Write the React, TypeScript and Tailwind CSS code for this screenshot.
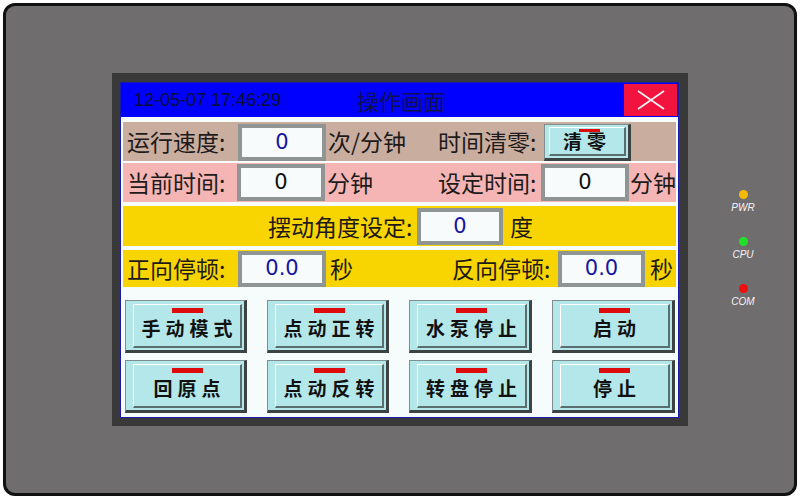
import React from 'react';

const cjk = "font-['Noto_Sans_CJK_SC',sans-serif]";

function ValueBox({ value, blue = true, w = 'w-[88px]', h = 'h-[37px]' }: { value: string; blue?: boolean; w?: string; h?: string }) {
  return (
    <div className={`${w} ${h} shrink-0 border-[4px] border-[#8f9595] bg-[#f7fbfb] flex items-center justify-center`}>
      <span className={`font-['DejaVu_Sans',sans-serif] text-[21px] leading-none ${blue ? 'text-[#1616a0]' : 'text-[#111]'}`}>{value}</span>
    </div>
  );
}

function PanelButton({ label, small = false }: { label: string; small?: boolean }) {
  return (
    <div
      className={`bg-[#b3e7e9] border-t border-l border-[#7f8f8f] border-r-[3px] border-b-[3px] border-r-[#3d4343] border-b-[#3d4343] flex ${
        small ? 'w-[87px] h-[37px] pt-[2px] pl-[4px] pr-[2px] pb-[2px]' : 'h-[53px] pt-[3px] pl-[7px] pr-[2px] pb-[2px]'
      }`}
    >
      <div className="flex-1 flex flex-col items-center border-t border-l border-white border-r-2 border-b-2 border-r-[#5b6e6e] border-b-[#5b6e6e]">
        <div className={`${small ? 'w-[21px] h-[3px] mt-[1px] ml-[4px]' : 'w-[31px] h-[5px] mt-[3px]'} bg-[#dd0b0b]`} />
        <span
          className={`${cjk} font-semibold text-[#111] leading-none ${small ? 'text-[19px] tracking-[5px] -mt-[1px]' : 'text-[19px] tracking-[5px] mt-[5px] pl-[5px]'}`}
        >
          {label}
        </span>
      </div>
    </div>
  );
}

function Led({ color, label }: { color: string; label: string }) {
  return (
    <div className="flex flex-col items-center h-[47px]">
      <div className={`w-[9px] h-[9px] rounded-full ${color}`} />
      <span className="mt-[3px] font-['Liberation_Sans',sans-serif] italic text-[10px] leading-[11px] text-[#f4f4f4]">{label}</span>
    </div>
  );
}

export default function App() {
  const rowText = `${cjk} text-[23px] leading-none text-[#1e1a1a] whitespace-nowrap`;

  return (
    <div className="w-[800px] h-[499px] bg-white p-[3px]">
      <div className="h-full rounded-[12px] border-[3px] border-[#111] bg-[#706d6e] flex items-start pl-[106px] pt-[67px]">
        {/* bezel */}
        <div className="w-[576px] h-[353px] shrink-0 bg-[#393939] pt-[9px] pl-[8px] pr-[9px] pb-[8px]">
          <div className="h-full border border-[#1a1aa8] bg-[#f6fbfb] flex flex-col">
            {/* title bar */}
            <div className="h-[34px] bg-[#0000ff] flex items-center">
              <span className="ml-[13px] w-[223px] font-['Liberation_Sans',sans-serif] text-[18px] text-[#0c0c30]">12-05-07 17:46:29</span>
              <span className={`${cjk} text-[22px] leading-none text-[#10104e]`}>操作画面</span>
              <div className="ml-auto w-[53px] h-[32px] mr-[1px] bg-[#f3133f] flex items-center justify-center">
                <svg width="30" height="20" viewBox="0 0 30 20">
                  <path d="M2 1 L28 19 M28 1 L2 19" stroke="#f4f4f4" strokeWidth="1.6" />
                </svg>
              </div>
            </div>

            <div className="px-[2px] pt-[5px] flex flex-col">
              {/* row 1 */}
              <div className="h-[39px] bg-[#c9ad9f] flex items-center pl-[4px]">
                <span className={`${rowText} w-[111px]`}>运行速度:</span>
                <div className="self-end"><ValueBox value="0" /></div>
                <span className={`${rowText} w-[112px] pl-[2px]`}>次/分钟</span>
                <span className={`${rowText} w-[106px]`}>时间清零:</span>
                <div className="self-end"><PanelButton label="清零" small /></div>
              </div>
              {/* row 2 */}
              <div className="mt-[2px] h-[39px] bg-[#f4b5b4] flex items-center pl-[4px]">
                <span className={`${rowText} w-[111px]`}>当前时间:</span>
                <ValueBox value="0" blue={false} />
                <span className={`${rowText} w-[114px] pl-[2px]`}>分钟</span>
                <span className={`${rowText} w-[104px]`}>设定时间:</span>
                <ValueBox value="0" blue={false} />
                <span className={`${rowText} pl-[1px]`}>分钟</span>
              </div>
              {/* row 3 */}
              <div className="mt-[4px] h-[40px] bg-[#f8d400] flex items-center pl-[145px]">
                <span className={`${rowText} w-[149px]`}>摆动角度设定:</span>
                <ValueBox value="0" w="w-[86px]" />
                <span className={`${rowText} pl-[7px]`}>度</span>
              </div>
              {/* row 4 */}
              <div className="mt-[4px] h-[37px] bg-[#f8d400] flex items-center pl-[4px]">
                <span className={`${rowText} w-[111px]`}>正向停顿:</span>
                <ValueBox value="0.0" h="h-[36px]" />
                <span className={`${rowText} w-[126px] pl-[4px]`}>秒</span>
                <span className={`${rowText} w-[106px]`}>反向停顿:</span>
                <ValueBox value="0.0" w="w-[87px]" h="h-[36px]" />
                <span className={`${rowText} pl-[5px]`}>秒</span>
              </div>

              {/* buttons */}
              <div className="mt-[13px] pl-[2px] grid grid-cols-[122px_122px_123px_123px] gap-x-[20px] gap-y-[7px]">
                <PanelButton label="手动模式" />
                <PanelButton label="点动正转" />
                <PanelButton label="水泵停止" />
                <PanelButton label="启动" />
                <PanelButton label="回原点" />
                <PanelButton label="点动反转" />
                <PanelButton label="转盘停止" />
                <PanelButton label="停止" />
              </div>
            </div>
          </div>
        </div>

        {/* status leds */}
        <div className="ml-[35px] mt-[117px] w-[40px] flex flex-col items-center">
          <Led color="bg-[#f5b90a]" label="PWR" />
          <Led color="bg-[#22e02a]" label="CPU" />
          <Led color="bg-[#ee1010]" label="COM" />
        </div>
      </div>
    </div>
  );
}
